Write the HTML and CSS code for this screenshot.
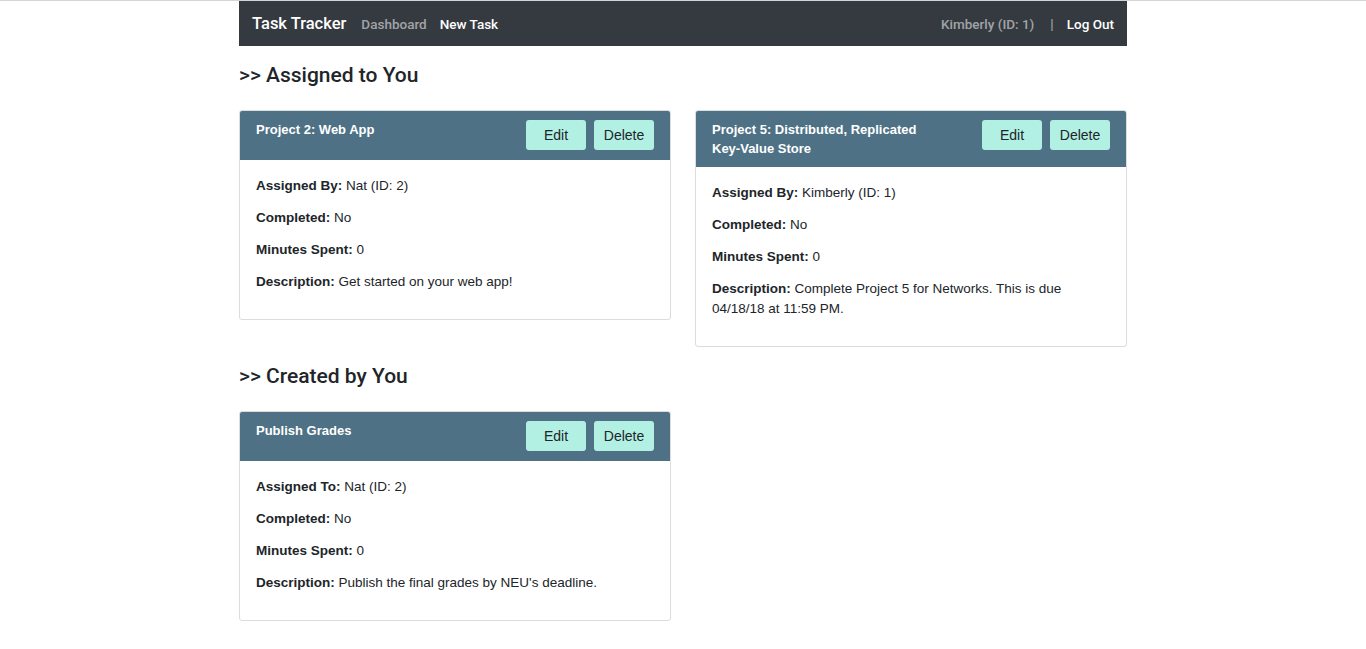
FILE: index.html
```html
<!DOCTYPE html>
<html>
<head>
<meta charset="utf-8">
<link rel="stylesheet" href="styles.css">
</head>
<body>
<div class="topline"></div>
<div class="container">
  <nav class="navbar">
    <div class="nav-left">
      <span class="brand">Task Tracker</span>
      <span class="nav-link muted">Dashboard</span>
      <span class="nav-link">New Task</span>
    </div>
    <div class="nav-right">
      <span class="nav-link muted">Kimberly (ID: 1)</span>
      <span class="sep">|</span>
      <span class="nav-link">Log Out</span>
    </div>
  </nav>

  <h2 class="section-title">&gt;&gt; Assigned to You</h2>
  <div class="grid">
    <div class="card">
      <div class="card-header">
        <div class="card-title">Project 2: Web App</div>
        <div class="actions"><span class="btn">Edit</span><span class="btn">Delete</span></div>
      </div>
      <div class="card-body">
        <p><b>Assigned By:</b> Nat (ID: 2)</p>
        <p><b>Completed:</b> No</p>
        <p><b>Minutes Spent:</b> 0</p>
        <p><b>Description:</b> Get started on your web app!</p>
      </div>
    </div>
    <div class="card">
      <div class="card-header">
        <div class="card-title">Project 5: Distributed, Replicated Key-Value Store</div>
        <div class="actions"><span class="btn">Edit</span><span class="btn">Delete</span></div>
      </div>
      <div class="card-body">
        <p><b>Assigned By:</b> Kimberly (ID: 1)</p>
        <p><b>Completed:</b> No</p>
        <p><b>Minutes Spent:</b> 0</p>
        <p><b>Description:</b> Complete Project 5 for Networks. This is due 04/18/18 at 11:59 PM.</p>
      </div>
    </div>
  </div>

  <h2 class="section-title">&gt;&gt; Created by You</h2>
  <div class="grid">
    <div class="card">
      <div class="card-header">
        <div class="card-title">Publish Grades</div>
        <div class="actions"><span class="btn">Edit</span><span class="btn">Delete</span></div>
      </div>
      <div class="card-body">
        <p><b>Assigned To:</b> Nat (ID: 2)</p>
        <p><b>Completed:</b> No</p>
        <p><b>Minutes Spent:</b> 0</p>
        <p><b>Description:</b> Publish the final grades by NEU's deadline.</p>
      </div>
    </div>
  </div>
</div>
</body>
</html>
```

FILE: styles.css
```css
* { box-sizing: border-box; }
html, body { margin: 0; padding: 0; background: #fff; }
body {
  font-family: "Liberation Sans", Arial, sans-serif;
  font-size: 14px;
  line-height: 20px;
  color: #212529;
}
.topline { height: 1px; background: #d4d4d4; }
.container { width: 888px; margin: 0 auto; }
.navbar {
  height: 45px;
  background: #343a40;
  display: flex;
  align-items: center;
  justify-content: space-between;
  padding: 0 13px;
}
.nav-left, .nav-right { display: flex; align-items: center; }
.brand {
  color: #fff;
  font-family: Roboto, "Liberation Sans", sans-serif;
  font-size: 16.5px;
  font-weight: 500;
  margin-right: 15px;
}
.nav-link {
  color: #fff;
  font-family: Roboto, "Liberation Sans", sans-serif;
  font-size: 13.5px;
  font-weight: 500;
  margin-right: 13px;
}
.nav-link:last-child { margin-right: 0; }
.nav-link.muted { color: rgba(255,255,255,0.55); }
.sep { color: rgba(255,255,255,0.55); margin-right: 13px; margin-left: 3px; font-size: 13px; }
.section-title {
  font-family: Roboto, "Liberation Sans", sans-serif;
  font-size: 21px;
  font-weight: 500;
  line-height: 26px;
  margin: 16px 0 22px;
  color: #212529;
}
.grid {
  display: grid;
  grid-template-columns: 432px 432px;
  column-gap: 24px;
  align-items: start;
}
.card {
  border: 1px solid #dcdcdc;
  border-radius: 3px;
  overflow: hidden;
}
.card-header {
  background: #4e7185;
  display: flex;
  align-items: flex-start;
  justify-content: space-between;
  padding: 9px 16px 9px 16px;
  min-height: 49px;
}
.card-title {
  color: #fff;
  font-weight: 700;
  font-size: 13px;
  line-height: 19px;
  max-width: 215px;
}
.actions { display: flex; gap: 8px; flex-shrink: 0; }
.btn {
  display: inline-flex;
  align-items: center;
  justify-content: center;
  width: 60px;
  height: 30px;
  background: #b1f0e3;
  border-radius: 3px;
  color: #212529;
  font-size: 14px;
}
.card-body { padding: 16px 16px 15px; }
.card-body p { margin: 0 0 12px; font-size: 13.5px; line-height: 20px; }
.card-body b { font-weight: 700; }
```
